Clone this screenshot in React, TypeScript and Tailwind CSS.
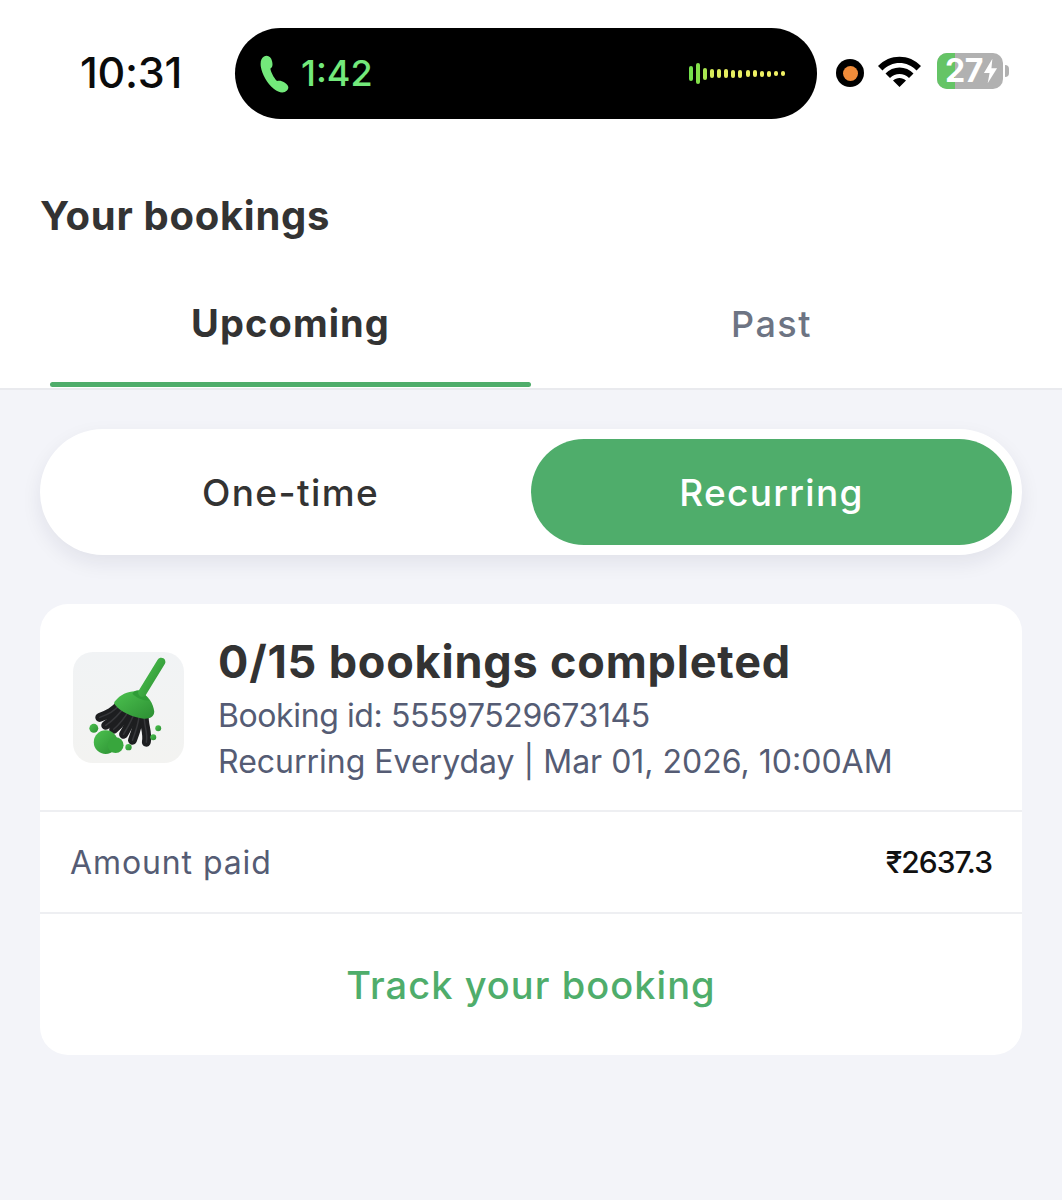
const font = { fontFamily: '"Inter", "Noto Sans", sans-serif' };

function Broom() {
  const bristles = [
    'M48 52 C42 60 35 63 27 66',
    'M52 55 C46 64 39 70 33 74',
    'M57 58 C52 67 47 73 41 78',
    'M62 61 C59 70 55 76 51 83',
    'M67 63 C66 73 63 81 60 89',
    'M72 64 C71 73 76 81 74 91',
  ];
  return (
    <svg viewBox="0 0 112 112" className="h-[111px] w-[111px]">
      <defs>
        <linearGradient id="g" x1="0" y1="0" x2="1" y2="1">
          <stop offset="0" stopColor="#4cc24f" />
          <stop offset="1" stopColor="#2c8f33" />
        </linearGradient>
        <linearGradient id="bg" x1="0" y1="0" x2="0" y2="1">
          <stop offset="0" stopColor="#f1f3f5" />
          <stop offset="1" stopColor="#f3f3f1" />
        </linearGradient>
      </defs>
      <rect width="112" height="112" rx="20" fill="url(#bg)" />
      <g fill="none" strokeLinecap="round">
        {bristles.map((d) => (
          <path key={d} d={d} stroke="#1d1e20" strokeWidth="9" />
        ))}
        {bristles.map((d) => (
          <path key={d + 'h'} d={d} stroke="#36373a" strokeWidth="1.5" />
        ))}
      </g>
      <path d="M43 49 C48 42 59 38 67 40 C76 43 81 52 82 60 C82 66 76 68 70 67 C60 66 48 60 43 54 C41 52 41 51 43 49Z" fill="url(#g)" />
      <path d="M60 42 C63 37 69 38 72 42 L77 49 C70 49 64 46 60 42Z" fill="#2f9c37" />
      <path d="M70 41 L89 10" stroke="url(#g)" strokeWidth="8.5" strokeLinecap="round" />
      <circle cx="33" cy="91" r="12" fill="url(#g)" />
      <circle cx="43" cy="94" r="8" fill="#38a63d" />
      <circle cx="21" cy="77" r="4.5" fill="url(#g)" />
      <circle cx="56" cy="96" r="3.2" fill="url(#g)" />
      <circle cx="81" cy="86" r="3" fill="url(#g)" />
      <circle cx="86" cy="77" r="3" fill="url(#g)" />
    </svg>
  );
}

function Waves() {
  const bars = [
    [15, '#74e04c'], [21, '#84e04a'], [12, '#a9e550'], [9, '#d6ea58'], [9, '#dcec5c'], [9, '#e6ee60'], [8, '#e6ee60'],
    [8, '#e9ef62'], [7, '#e9ef62'], [7, '#eef063'], [6, '#eef063'], [6, '#f0f065'], [5, '#f0f065'], [5, '#f0f065'],
  ] as const;
  return (
    <div className="flex items-center gap-[3.1px]">
      {bars.map(([h, c], i) => (
        <span key={i} className="w-[4px] rounded-full" style={{ height: h, backgroundColor: c }} />
      ))}
    </div>
  );
}

export default function App() {
  return (
    <div className="flex h-[1200px] w-[1062px] flex-col overflow-hidden bg-[#f3f4f9]" style={font}>
      <div className="bg-white">
        <div className="flex h-[190px] items-start pt-[28px]">
          <div className="w-[235px] pl-[80px] pt-[19px] text-[43px] leading-[50px] font-medium tracking-[-0.3px] text-[#0b0b0b]">10:31</div>
          <div className="flex h-[91px] w-[582px] items-center justify-between rounded-full bg-black pl-[25px] pr-[32px]">
            <div className="flex items-center gap-[11px]">
              <svg viewBox="0 0 30 38" className="h-[38px] w-[30px]">
                <path d="M4 1.5 C8 -0.5 11 2 12 6 C13 10 12.5 12 10.5 13.5 C10 15 13.5 23 17 26 C19.5 25.5 21.5 25.5 24.5 27.5 C28.5 30 29.5 33 27 35.5 C24 38.5 19 38 14 34 C7 28.5 2 19 0.8 11.5 C0.2 7 1 3.5 4 1.5Z" fill="#73e97b" />
              </svg>
              <span className="-mt-[2px] text-[36px] leading-none font-medium text-[#73e97b]">1:42</span>
            </div>
            <Waves />
          </div>
          <div className="flex items-center pl-[19px] pt-[25px]">
            <div className="mt-[4px] flex h-[28px] w-[28px] items-center justify-center rounded-full bg-black">
              <span className="h-[15px] w-[15px] rounded-full bg-[#f08c3a]" />
            </div>
            <svg viewBox="0 0 44 32" className="ml-[13px] h-[32px] w-[45px]">
              <path d="M0.5 11 C12 -1.5 32 -1.5 43.5 11 L39 15.5 C30 5.5 14 5.5 5 15.5Z M8 18.5 C15 10.5 29 10.5 36 18.5 L31.5 23 C26.5 17.5 17.5 17.5 12.5 23Z M15.5 25.5 C19 22 25 22 28.5 25.5 L22 32Z" fill="#000" />
            </svg>
            <div className="relative ml-[15px] flex h-[36px] w-[66px] rounded-[10px] bg-[#b1b1b1]">
              <div className="h-full w-[18px] rounded-l-[10px] bg-[#65c466]" />
              <span className="absolute left-[8px] top-[2px] text-[32px] leading-[32px] font-bold tracking-[-0.5px] text-white">27</span>
              <svg viewBox="0 0 16 26" className="absolute right-[5px] top-[5px] h-[26px] w-[15px]">
                <path d="M10 0 L1 15 H7 L5 26 L15 10 H9Z" fill="#fff" />
              </svg>
            </div>
            <div className="ml-[2px] h-[12px] w-[4px] rounded-r-full bg-[#b1b1b1]" />
          </div>
        </div>
        <div className="h-[75px] pl-[40px] pt-[3px] text-[40px] leading-[46px] font-bold tracking-[0.7px] text-[#333333]">
          Your bookings
        </div>
        <div className="relative flex h-[123px] items-center px-[50px] pb-[6px]">
          <div className="w-[481px] text-center text-[38px] font-bold tracking-[1.1px] text-[#333333]">Upcoming</div>
          <div className="flex-1 text-center text-[36px] font-medium tracking-[1.5px] text-[#6d7483]">Past</div>
          <div className="absolute bottom-[1px] left-[50px] h-[5px] w-[481px] rounded-full bg-[#4fad6b]" />
        </div>
      </div>
      <div className="h-[2px] bg-[#e9eaee]" />
      <div className="px-[40px] pt-[39px]">
        <div className="flex h-[126px] items-center rounded-full bg-white px-[10px] shadow-[0_8px_20px_rgba(20,30,60,0.08)]">
          <div className="flex-1 pt-[2px] text-center text-[37px] font-medium tracking-[1.4px] text-[#333333]">One-time</div>
          <div className="flex h-[106px] w-[481px] items-center justify-center rounded-full bg-[#4fad6b] pt-[2px] text-[37px] font-medium tracking-[1.3px] text-white">Recurring</div>
        </div>
        <div className="mt-[49px] overflow-hidden rounded-[28px] bg-white">
          <div className="flex h-[208px] items-start border-b-2 border-[#eeeff2] pl-[33px] pt-[48px]">
            <Broom />
            <div className="ml-[34px] -mt-[16px]">
              <div className="mb-[5px] text-[45px] leading-[52px] font-bold tracking-[0.8px] text-[#333333]">0/15 bookings completed</div>
              <div className="text-[32px] leading-[46px] tracking-[-0.4px] text-[#555c74]">Booking id: 55597529673145</div>
              <div className="text-[32px] leading-[46px] text-[#555c74]">Recurring Everyday | Mar 01, 2026, 10:00AM</div>
            </div>
          </div>
          <div className="flex h-[102px] items-center justify-between border-b-2 border-[#eeeff2] px-[30px]">
            <span className="pt-[2px] text-[32px] tracking-[0.9px] text-[#555c74]">Amount paid</span>
            <span className="text-[30px] font-medium tracking-[-1px] text-[#111111]">₹2637.3</span>
          </div>
          <div className="flex h-[141px] items-center justify-center pt-[2px] text-[38px] font-medium tracking-[1.05px] text-[#4fad6b]">Track your booking</div>
        </div>
      </div>
    </div>
  );
}
